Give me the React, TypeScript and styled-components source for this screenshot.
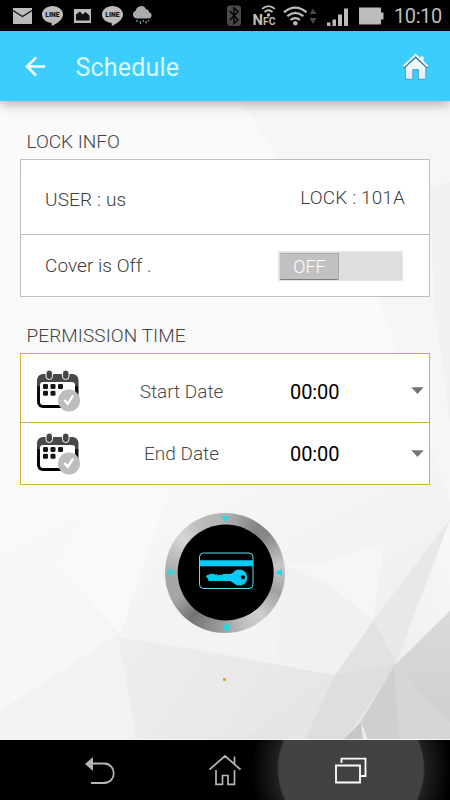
import React from 'react';
import styled, { createGlobalStyle } from 'styled-components';

const GlobalStyle = createGlobalStyle`
  * { box-sizing: border-box; }
  body { margin: 0; background: #000; font-family: Roboto, sans-serif; }
  svg { display: block; flex: none; }
`;

const Screen = styled.div`
  width: 450px;
  height: 800px;
  display: flex;
  flex-direction: column;
  overflow: hidden;
  background: #000;
`;

const StatusBar = styled.div`
  height: 31px;
  flex: none;
  display: flex;
  align-items: flex-start;
  justify-content: space-between;
  padding: 0 7px 0 13px;
`;

const IconGroup = styled.div<{ $gap: number }>`
  display: flex;
  gap: ${(p) => p.$gap}px;
`;

const Clock = styled.span`
  width: 49px;
  margin-left: 10px;
  font-size: 20px;
  line-height: 33px;
  letter-spacing: -0.4px;
  color: #bdbdbd;
  white-space: nowrap;
`;

const Header = styled.header`
  height: 70px;
  flex: none;
  display: flex;
  align-items: center;
  padding: 0 21px 0 25px;
  background: #3bcefc;
  position: relative;
  z-index: 1;
  box-shadow: 0 2px 12px rgba(0, 0, 0, 0.36);
`;

const Title = styled.h1`
  flex: 1;
  margin: 4px 0 0 30.5px;
  font-size: 25px;
  font-weight: 400;
  line-height: 32px;
  letter-spacing: 0.2px;
  color: #dcf8ff;
`;

const Content = styled.main`
  height: 639px;
  flex: none;
  display: flex;
  flex-direction: column;
  padding: 26px 20px 0;
  position: relative;
  isolation: isolate;
  background: #f8f8f8;
`;

const Backdrop = styled.svg`
  position: absolute;
  inset: 0;
  z-index: -1;
`;

const SectionTitle = styled.h2<{ $top?: number; $spacing: number }>`
  margin: ${(p) => p.$top ?? 0}px 0 0 6.5px;
  height: 28px;
  font-size: 19px;
  font-weight: 300;
  line-height: 29px;
  letter-spacing: ${(p) => p.$spacing}px;
  color: #444;
  & + * { margin-top: 4px; }
`;

const Card = styled.section<{ $line: string }>`
  border: 1px solid ${(p) => p.$line};
  background: #fff;
  > * + * { border-top: 1px solid ${(p) => p.$line}; }
`;

const InfoRow = styled.div<{ $height: number }>`
  height: ${(p) => p.$height}px;
  display: flex;
  align-items: center;
  justify-content: space-between;
  padding: 0 24px;
`;

const InfoText = styled.span<{ $drop?: number; $spacing?: number }>`
  font-size: 19px;
  font-weight: 300;
  line-height: 24px;
  letter-spacing: ${(p) => p.$spacing ?? 0.05}px;
  margin-top: ${(p) => p.$drop ?? 0}px;
  color: #3d3d3d;
`;

const Switch = styled.button`
  width: 125px;
  height: 30px;
  margin: 0 2px 0 0;
  padding: 1px 0 0 1px;
  border: 1px solid #e6e6e6;
  background: #dedede;
  display: flex;
`;

const SwitchThumb = styled.span`
  width: 59px;
  height: 27px;
  padding-left: 1px;
  border: solid #aaa;
  border-width: 1px 1px 1px 0;
  border-bottom-color: #7c7c7c;
  border-radius: 1px;
  background: #c1c1c1;
  color: #fff;
  font: 300 18px/26px Roboto, sans-serif;
  text-align: center;
`;

const DateRow = styled.div<{ $height: number; $inset: number }>`
  height: ${(p) => p.$height}px;
  display: grid;
  grid-template-columns: 58px 206px 59px 1fr 13px;
  align-items: center;
  padding: ${(p) => p.$inset}px 5px 0 16px;
`;

const DateLabel = styled.span`
  width: 100px;
  justify-self: end;
  margin-right: 69.5px;
  padding-top: 1px;
  font-size: 19px;
  font-weight: 300;
  line-height: 24px;
  text-align: center;
  white-space: nowrap;
  color: #4a4a4a;
`;

const Time = styled.span`
  padding-top: 1px;
  font-size: 20px;
  line-height: 24px;
  letter-spacing: -0.1px;
  color: #000;
  margin-left: -11px;
`;

const KeyButton = styled.button`
  width: 120px;
  height: 120px;
  margin: 28px auto 0;
  padding: 0;
  border: 0;
  border-radius: 50%;
  background: conic-gradient(#b2b2b2, #848484 35deg, #878787 48deg, #c8c8c8 82deg, #a2a2a2 110deg,
    #cecece 140deg, #c0c0c0 160deg, #9b9b9b 185deg, #737373 217deg, #a5a5a5 242deg, #a8a8a8 270deg,
    #d6d6d6 310deg, #bebebe 330deg, #b2b2b2);
`;

const Dot = styled.span`
  width: 3px;
  height: 3px;
  margin: 45px auto 0 203px;
  border-radius: 1px;
  background: #d9a514;
`;

const NavBar = styled.nav`
  height: 60px;
  flex: none;
  display: flex;
  align-items: center;
  background: radial-gradient(circle at 351px 29px, #424242 0 72px, #202020 74px, #000 100px);
`;

const NavButton = styled.button<{ $left: number }>`
  margin: 0 0 0 ${(p) => p.$left}px;
  padding: 0;
  border: 0;
  background: none;
`;

function MailIcon() {
  return (
    <svg width="19" height="31" viewBox="13 0 19 31" fill="#bdbdbd">
      <path d="M13 8h19v16H13z" />
      <path d="M13 10.500l9.500 6 9.500-6" fill="none" stroke="#111" strokeWidth="1.400" />
    </svg>
  );
}

function LineIcon() {
  return (
    <svg width="21" height="31" viewBox="42 0 21 31">
      <path d="M52.500 6C46.700 6 42 9.800 42 14.400c0 4.200 3.700 7.600 8.800 8.300 1 .2 1.100.7.900 3.300 4.600-2.300 11.300-6 11.300-11.600C63 9.800 58.300 6 52.500 6z" fill="#bdbdbd" />
      <text x="45.300" y="17.200" fontSize="6.600" fontWeight="900" fontFamily="Roboto, sans-serif" textLength="14.400" lengthAdjust="spacingAndGlyphs" fill="#161616">LINE</text>
    </svg>
  );
}

function PictureIcon() {
  return (
    <svg width="19" height="31" viewBox="73 0 19 31">
      <path d="M74 9h17v14H74z" fill="#bdbdbd" />
      <path d="M76 20.500v-6l4-3 2.500 3 3-2.500 4 3.500v5z" fill="#111" />
    </svg>
  );
}

function RainIcon() {
  return (
    <svg width="20" height="31" viewBox="133 0 20 31">
      <path d="M136.500 18.500a4 4 0 0 1-.7-7.800 5.400 5.400 0 0 1 10.200-1.600 4 4 0 0 1 3.200 3.100 3.200 3.200 0 0 1-.6 6.300z" fill="#aaa" />
      <path d="M136.500 20l.8 2M140 21l.8 3M143 20l.8 2M145.700 21l.8 2.500M148 20l.5 1.500" stroke="#739bad" strokeWidth="1.200" />
    </svg>
  );
}

function ConnectivityIcons() {
  return (
    <svg width="157" height="31" viewBox="227 0 157 31">
      <rect x="227" y="5.500" width="14" height="20.500" rx="3" fill="#4a4a4a" />
      <path d="M230 11l8 9-4 3.500V8l4 3.500-8 8.500" fill="none" stroke="#050505" strokeWidth="1.500" />
      <g fill="#bdbdbd" fontFamily="Roboto, sans-serif" fontWeight="700">
        <text x="252.500" y="25" fontSize="15" textLength="10.500" lengthAdjust="spacingAndGlyphs">N</text>
        <text x="263" y="25" fontSize="10.500" textLength="12.500" lengthAdjust="spacingAndGlyphs">FC</text>
      </g>
      <g fill="none" stroke="#bdbdbd" strokeWidth="1.700">
        <path d="M262 8.800q6.500-5.500 13 0M264.500 12q4-3.500 8 0" />
        <path d="M284 12.400q11.200-9.400 22.500 0" strokeWidth="2.200" />
        <path d="M287.300 16.200q8-6.700 16 0M290.600 20q4.700-3.900 9.400 0" strokeWidth="2.200" />
      </g>
      <g fill="#bdbdbd">
        <circle cx="268.500" cy="15" r="1.700" />
        <circle cx="295.300" cy="23.300" r="2.300" />
        <path d="M327 22.500h3.500V26H327zM332.500 19.500h3.500V26h-3.500zM338 14.500h4V26h-4zM344 8.500h4V26h-4z" />
        <path d="M359 7.500h22v5h2.500v7H381v5h-22z" />
      </g>
      <path d="M309.500 14l3.500-5.500 3.500 5.500zM309.500 18l3.500 6 3.500-6z" fill="#484848" />
    </svg>
  );
}

function BackArrow() {
  return (
    <svg width="20" height="20" viewBox="25 56 20 20" fill="none" stroke="#f4fdff" strokeWidth="2.600">
      <path d="M45 66.500H27M36.200 57.300L27 66.500l9.200 9.200" />
    </svg>
  );
}

function HomeIcon() {
  return (
    <svg width="28" height="28" viewBox="401 52 28 28">
      <defs>
        <linearGradient id="house" x2="0" y2="1">
          <stop stopColor="#fff" />
          <stop offset="1" stopColor="#dcecf2" />
        </linearGradient>
      </defs>
      <path d="M405.500 67v12.300h7.300v-9.800h5.600v9.800h7.400V67l-10.200-9z" fill="url(#house)" stroke="#4098b8" strokeWidth=".8" />
      <path d="M420.500 56.500h3v6l-3-3z" fill="#f4fcff" />
      <path d="M403.300 67.600l12.300-11.700 12.300 11.700" fill="none" stroke="#347f9d" strokeWidth="2.700" />
      <path d="M403.300 66.500l12.300-11.600 12.300 11.600" fill="none" stroke="#f5fcff" strokeWidth="1.900" />
    </svg>
  );
}

function Facets() {
  return (
    <Backdrop width="450" height="639" viewBox="0 101 450 639">
      <defs>
        <linearGradient id="wash" x1="0" y1="0" x2=".35" y2="1">
          <stop stopColor="#fafafa" />
          <stop offset=".6" stopColor="#f9f9f9" />
          <stop offset="1" stopColor="#efefef" />
        </linearGradient>
        <linearGradient id="side" x1="0" y1="0" x2="0" y2="1">
          <stop stopColor="#dadada" />
          <stop offset="1" stopColor="#cecece" />
        </linearGradient>
        <linearGradient id="floor" x1="0" y1="0" x2="1" y2=".3">
          <stop stopColor="#eee" />
          <stop offset="1" stopColor="#e6e6e6" />
        </linearGradient>
        <linearGradient id="slope" x1="0" y1="1" x2="1" y2="0">
          <stop stopColor="#eeeeee" />
          <stop offset="1" stopColor="#f8f8f8" />
        </linearGradient>
      </defs>
      <path d="M0 101h450v639H0z" fill="url(#wash)" />
      <path d="M240 101h210v400l-70-200-80-110z" fill="#f6f6f6" />
      <path d="M242 330l65-130 50 100 15 53z" fill="#f9f9f9" />
      <path d="M430 190l20-8v240l-16-118z" fill="#f1f1f1" />
      <path d="M0 570l55-3 63 70L0 711z" fill="#f7f7f7" />
      <path d="M55 567l45-80h70l-50 148z" fill="#f9f9f9" />
      <path d="M120 633l46-85 119 14 50 113z" fill="#f3f3f3" />
      <path d="M0 711l120-78 15 107H0z" fill="#f2f2f2" />
      <path d="M118 637l67 11 150 27-95 65H137z" fill="url(#floor)" />
      <path d="M285 564l30 1 70-24-12 78z" fill="#f6f6f6" />
      <path d="M285 565l45 20 44 36-39 54-60-12z" fill="#f1f1f1" />
      <path d="M335 675l60-13 55-51v129H240z" fill="#e5e5e5" />
      <path d="M450 520L374 620l-39 55 60-12z" fill="#e2e2e2" />
      <path d="M450 520L429 577 396 663 374 620z" fill="#e8e8e8" />
      <path d="M450 520v91l-54 53z" fill="url(#slope)" />
      <path d="M335 675l60-12v3l-51 74h-39z" fill="#dedede" />
      <path d="M394 666l56-55v129h-89z" fill="url(#side)" />
      <path d="M394 666l56 57v17h-51z" fill="#d6d6d6" />
      <path d="M394 666l-33 56 7 18h31z" fill="#cfcfcf" />
      <path d="M361 722l-18 18h24z" fill="#c7c7c7" />
      <path d="M361 722l7 18h-5z" fill="#ededed" />
      <path d="M0 739h450v1H0z" fill="#f5f5f5" />
    </Backdrop>
  );
}

function CalendarIcon() {
  return (
    <svg width="44" height="42" viewBox="0 0 44 42">
      <defs>
        <linearGradient id="frame" x2="0" y2="1">
          <stop stopColor="#484848" />
          <stop offset=".35" stopColor="#484848" />
          <stop offset=".36" stopColor="#111" />
          <stop offset="1" stopColor="#000" />
        </linearGradient>
      </defs>
      <rect x="0" y="4" width="41.500" height="34" rx="6" fill="url(#frame)" />
      <rect x="3" y="12" width="35" height="23" rx="3" fill="#fff" />
      <g fill="#444" stroke="#fff">
        <rect x="9" y="0" width="6.500" height="9.500" rx="3.200" />
        <rect x="25.500" y="0" width="6.500" height="9.500" rx="3.200" />
      </g>
      <g fill="#151515">
        <rect x="6" y="14" width="5" height="5" rx="1.300" />
        <rect x="13.500" y="14" width="5" height="5" rx="1.300" />
        <rect x="21" y="14" width="5" height="5" rx="1.300" />
        <rect x="6" y="20.700" width="5" height="5" rx="1.300" />
        <rect x="13.500" y="20.700" width="5" height="5" rx="1.300" />
      </g>
      <circle cx="32" cy="30.500" r="11" fill="#bdbdbd" />
      <path d="M27.500 30l3.200 3.800 5.500-8.300" fill="none" stroke="#fff" strokeWidth="2.300" />
    </svg>
  );
}

function DropArrow() {
  return (
    <svg width="13" height="20" viewBox="0 0 13 20">
      <path d="M.3 6.200h12.400L6.500 13z" fill="#747474" />
    </svg>
  );
}

function KeyCardIcon() {
  return (
    <svg width="120" height="120" viewBox="0 0 120 120">
      <circle cx="60.700" cy="59.500" r="48" fill="#000" />
      <g fill="#1fdce6">
        <path d="M56.500 3h7.500l-3.700 6.500zM58 117l1-5 2.500-1.500 2.500 1.500 1 5zM3.500 55.500l7 3.500-7 3.500zM117 56v7l-7-3.500z" />
      </g>
      <rect x="34.500" y="40" width="53.500" height="35.500" rx="4" fill="none" stroke="#65dcf8" />
      <g fill="#09c9f7">
        <path d="M35 47.300h53v6H35z" />
        <path d="M41 63.500l1-1.500 2.500-.5.800-1 1.200 1 1.500-1.300 1.200 1.300h3.500l1 1 1-1 1.500.8 2-1.200h7l3.500-1.500v10.500L65 68H43.500L43 66z" />
        <path fillRule="evenodd" d="M74.300 56.500a8 8 0 1 1 0 16 8 8 0 0 1 0-16zM78 62.200a2.100 2.100 0 1 0 0 4.200 2.100 2.100 0 0 0 0-4.200z" />
      </g>
    </svg>
  );
}

function NavBack() {
  return (
    <svg width="30" height="29" viewBox="85 755 30 29">
      <path d="M92 762.500h12c13 0 13 19.500 0 19.500H91" fill="none" stroke="#b5b5b5" strokeWidth="1.800" />
      <path d="M85 763l8-7v14z" fill="#b5b5b5" />
    </svg>
  );
}

function NavHome() {
  return (
    <svg width="32" height="32" viewBox="209 753 32 32" fill="none" stroke="#b5b5b5" strokeWidth="1.700">
      <path d="M209.500 768.500L225 755l15.500 13.500M234.500 755.500v8M216 769v14.300h6.500v-8.800h5.500v8.800h6.500V769" />
    </svg>
  );
}

function NavRecent() {
  return (
    <svg width="33" height="27" viewBox="335 756 33 27" fill="none" stroke="#fff" strokeWidth="1.800">
      <path d="M336 764.500h24v17h-24zM341.500 762v-4.300h24V775H361" />
    </svg>
  );
}

const dates = [
  { label: 'Start Date', time: '00:00', height: 68, inset: 6 },
  { label: 'End Date', time: '00:00', height: 62, inset: 0 },
];

export default function App() {
  return (
    <Screen>
      <GlobalStyle />
      <StatusBar>
        <IconGroup $gap={10}>
          <MailIcon />
          <LineIcon />
          <PictureIcon />
          <LineIcon />
          <RainIcon />
        </IconGroup>
        <IconGroup $gap={0}>
          <ConnectivityIcons />
          <Clock>10:10</Clock>
        </IconGroup>
      </StatusBar>
      <Header>
        <BackArrow />
        <Title>Schedule</Title>
        <HomeIcon />
      </Header>
      <Content>
        <Facets />
        <SectionTitle $spacing={0}>LOCK INFO</SectionTitle>
        <Card $line="#bebebe">
          <InfoRow $height={74}>
            <InfoText $drop={5} $spacing={0.15}>USER : us</InfoText>
            <InfoText $drop={2} $spacing={0.12}>LOCK : 101A</InfoText>
          </InfoRow>
          <InfoRow $height={62}>
            <InfoText $drop={1}>Cover is Off .</InfoText>
            <Switch>
              <SwitchThumb>OFF</SwitchThumb>
            </Switch>
          </InfoRow>
        </Card>
        <SectionTitle $top={24} $spacing={0.08}>PERMISSION TIME</SectionTitle>
        <Card $line="#d0ae3b">
          {dates.map((d) => (
            <DateRow key={d.label} $height={d.height} $inset={d.inset}>
              <CalendarIcon />
              <DateLabel>{d.label}</DateLabel>
              <Time>{d.time}</Time>
              <span />
              <DropArrow />
            </DateRow>
          ))}
        </Card>
        <KeyButton aria-label="Key card">
          <KeyCardIcon />
        </KeyButton>
        <Dot />
      </Content>
      <NavBar>
        <NavButton $left={85} aria-label="Back"><NavBack /></NavButton>
        <NavButton $left={94} aria-label="Home"><NavHome /></NavButton>
        <NavButton $left={94} aria-label="Recent"><NavRecent /></NavButton>
      </NavBar>
    </Screen>
  );
}
